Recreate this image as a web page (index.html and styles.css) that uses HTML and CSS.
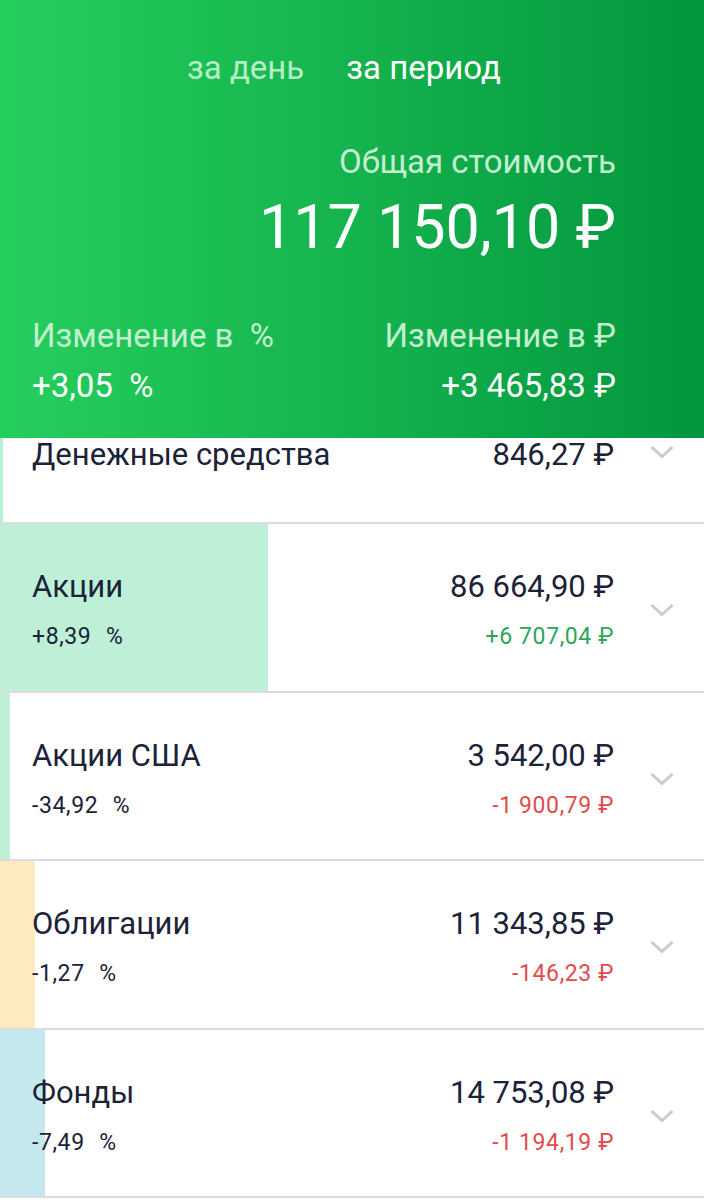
FILE: index.html
```html
<!DOCTYPE html>
<html lang="ru">
<head>
<meta charset="utf-8">
<link rel="stylesheet" href="styles.css">
</head>
<body>
<header class="hero">
  <nav class="tabs">
    <span class="tab">за день</span>
    <span class="tab active">за период</span>
  </nav>
  <div class="total">
    <div class="total-label">Общая стоимость</div>
    <div class="total-value">117 150,10 ₽</div>
  </div>
  <div class="changes">
    <div class="change">
      <div class="change-label">Изменение в &nbsp;%</div>
      <div class="change-value">+3,05 &nbsp;%</div>
    </div>
    <div class="change right">
      <div class="change-label">Изменение в ₽</div>
      <div class="change-value">+3 465,83 ₽</div>
    </div>
  </div>
</header>
<main class="list">
  <div class="row first">
    <div class="bar" style="width:3px;background:#bdf0d7"></div>
    <div class="row-main">
      <div class="cell-left"><div class="name">Денежные средства</div></div>
      <div class="cell-right"><div class="value">846,27 ₽</div></div>
    </div>
    <div class="chev"><svg width="24" height="16" viewBox="0 0 24 16"><path d="M1.5 3 L12 12.5 L22.5 3" fill="none" stroke="#cbcbcb" stroke-width="3"/></svg></div>
  </div>
  <div class="row">
    <div class="bar" style="width:268px;background:#bdf0d7"></div>
    <div class="row-main">
      <div class="cell-left"><div class="name">Акции</div><div class="pct">+8,39 &nbsp;%</div></div>
      <div class="cell-right"><div class="value">86 664,90 ₽</div><div class="delta pos">+6 707,04 ₽</div></div>
    </div>
    <div class="chev"><svg width="24" height="16" viewBox="0 0 24 16"><path d="M1.5 3 L12 12.5 L22.5 3" fill="none" stroke="#cbcbcb" stroke-width="3"/></svg></div>
  </div>
  <div class="row">
    <div class="bar" style="width:10px;background:#bdf0d7"></div>
    <div class="row-main">
      <div class="cell-left"><div class="name">Акции США</div><div class="pct">-34,92 &nbsp;%</div></div>
      <div class="cell-right"><div class="value">3 542,00 ₽</div><div class="delta neg">-1 900,79 ₽</div></div>
    </div>
    <div class="chev"><svg width="24" height="16" viewBox="0 0 24 16"><path d="M1.5 3 L12 12.5 L22.5 3" fill="none" stroke="#cbcbcb" stroke-width="3"/></svg></div>
  </div>
  <div class="row">
    <div class="bar" style="width:35px;background:#ffeac2"></div>
    <div class="row-main">
      <div class="cell-left"><div class="name">Облигации</div><div class="pct">-1,27 &nbsp;%</div></div>
      <div class="cell-right"><div class="value">11 343,85 ₽</div><div class="delta neg">-146,23 ₽</div></div>
    </div>
    <div class="chev"><svg width="24" height="16" viewBox="0 0 24 16"><path d="M1.5 3 L12 12.5 L22.5 3" fill="none" stroke="#cbcbcb" stroke-width="3"/></svg></div>
  </div>
  <div class="row">
    <div class="bar" style="width:45px;background:#c3e9ef"></div>
    <div class="row-main">
      <div class="cell-left"><div class="name">Фонды</div><div class="pct">-7,49 &nbsp;%</div></div>
      <div class="cell-right"><div class="value">14 753,08 ₽</div><div class="delta neg">-1 194,19 ₽</div></div>
    </div>
    <div class="chev"><svg width="24" height="16" viewBox="0 0 24 16"><path d="M1.5 3 L12 12.5 L22.5 3" fill="none" stroke="#cbcbcb" stroke-width="3"/></svg></div>
  </div>
</main>
</body>
</html>
```
FILE: styles.css
```css
* { box-sizing: border-box; }
html, body { margin: 0; padding: 0; }
body {
  width: 704px;
  height: 1200px;
  overflow: hidden;
  background: #ffffff;
  font-family: Roboto, "Noto Sans", sans-serif;
  color: #1c2238;
}
.hero {
  height: 438px;
  background: linear-gradient(90deg, #25cf5c 0%, #15b34e 50%, #02963d 100%);
  color: #ffffff;
  padding: 0 88px 0 32px;
  display: flex;
  flex-direction: column;
}
.tabs {
  display: flex;
  gap: 42px;
  padding-top: 48px;
  padding-left: 155px;
  font-size: 33px;
  line-height: 40px;
}
.tab { color: #b4efc6; }
.tab.active { color: #ffffff; }
.total {
  text-align: right;
  margin-top: 54px;
}
.total-label {
  font-size: 33px;
  line-height: 40px;
  color: #c2f0d0;
}
.total-value {
  font-size: 61px;
  line-height: 70px;
  margin-top: 10px;
}
.changes {
  display: flex;
  justify-content: space-between;
  margin-top: 54px;
}
.change-label {
  font-size: 33px;
  line-height: 40px;
  color: #c2f0d0;
}
.change-value {
  font-size: 33px;
  line-height: 40px;
  margin-top: 10px;
}
.change.right { text-align: right; }

.list { display: flex; flex-direction: column; }
.row {
  position: relative;
  height: 168.6px;
  border-bottom: 2px solid #dcdcdc;
  display: flex;
  align-items: center;
}
.row.first {
  height: 86px;
  align-items: flex-start;
}
.bar {
  position: absolute;
  left: 0;
  top: 0;
  bottom: 0;
}
.row-main {
  position: relative;
  flex: 1;
  display: flex;
  justify-content: space-between;
  padding-left: 32px;
  padding-top: 5px;
}
.row.first .row-main { padding-top: 0; }
.cell-right { text-align: right; }
.name, .value {
  font-size: 31px;
  line-height: 38px;
  color: #1c2238;
}
.row.first .name, .row.first .value { line-height: 34px; }
.pct, .delta {
  font-size: 23px;
  line-height: 28px;
  margin-top: 17px;
  letter-spacing: 0.6px;
  color: #1c2238;
}
.pct { word-spacing: 1px; }
.delta.pos { color: #2ea65a; }
.delta.neg { color: #e24b4b; }
.chev {
  position: relative;
  width: 90px;
  display: flex;
  padding-left: 36px;
  padding-top: 6px;
}
.row.first .chev { padding-top: 6px; }
```
